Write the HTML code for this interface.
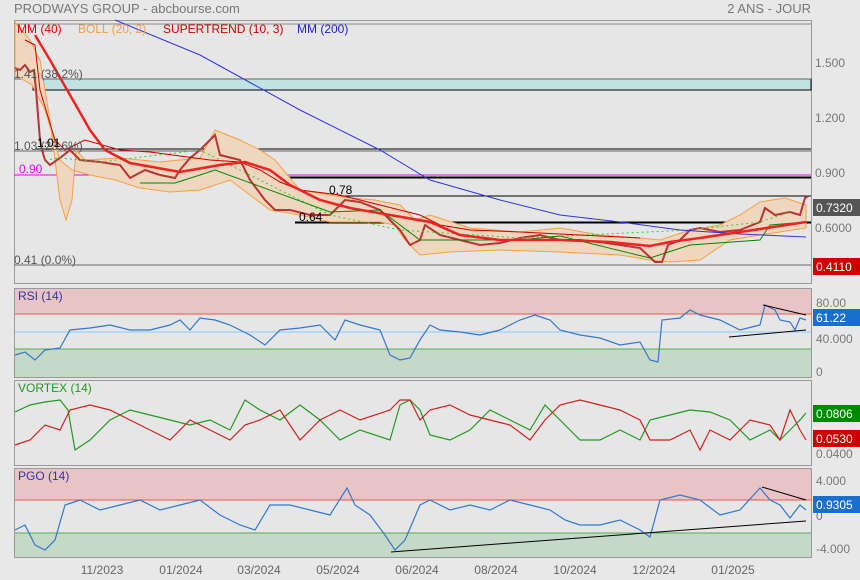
<!DOCTYPE html>
<html><head><meta charset="utf-8"><style>
body{margin:0;width:860px;height:580px;background:#e8e8e8;font-family:"Liberation Sans",sans-serif;overflow:hidden}
svg{display:block}
text{font-family:"Liberation Sans",sans-serif}
</style></head><body>
<svg width="860" height="580" xmlns="http://www.w3.org/2000/svg">
<rect width="860" height="580" fill="#e8e8e8"/>
<text x="14" y="13" font-size="13" fill="#777">PRODWAYS GROUP - abcbourse.com</text>
<text x="811" y="13" font-size="13" fill="#777" text-anchor="end">2 ANS - JOUR</text>
<rect x="14.5" y="20.5" width="797" height="263" fill="#e6e6e6" stroke="#999"/>
<line x1="14" y1="24" x2="811" y2="24" stroke="#888"/>
<rect x="33" y="79" width="778" height="11" fill="#bfe3e3" stroke="#000"/>
<line x1="14" y1="79" x2="811" y2="79" stroke="#666"/>
<line x1="14" y1="151" x2="811" y2="151" stroke="#666"/>
<line x1="35" y1="149" x2="811" y2="149" stroke="#000"/>
<line x1="14" y1="175" x2="811" y2="175" stroke="#e0e"/>
<line x1="243" y1="177.5" x2="811" y2="177.5" stroke="#000" stroke-width="2"/>
<line x1="325" y1="196" x2="811" y2="196" stroke="#000"/>
<line x1="295" y1="222.5" x2="811" y2="222.5" stroke="#000" stroke-width="2"/>
<line x1="14" y1="265" x2="811" y2="265" stroke="#666"/>
<path d="M15,22 L30,40 L40,60 L50,120 L60,200 L66,220 L72,200 L76,150 L85,160 L120,158 L160,162 L200,158 L215,130 L240,140 L260,150 L275,160 L300,190 L330,195 L350,198 L375,200 L400,205 L415,220 L430,215 L470,228 L520,232 L560,228 L600,235 L640,238 L660,240 L690,230 L720,225 L740,215 L760,202 L785,198 L806,205 L806,228 L780,232 L760,235 L730,240 L700,260 L670,262 L650,260 L620,255 L560,252 L500,250 L450,252 L420,255 L405,240 L395,225 L380,222 L330,222 L300,215 L270,210 L250,195 L230,180 L200,190 L170,192 L140,188 L115,180 L90,175 L72,170 L60,160 L45,110 L32,85 L15,75 Z" fill="#eed6bf" stroke="#f5a040"/>
<polyline points="15,68 20,70 25,65 30,72 34,70 36,90 38,115 40,140 42,150 45,160 50,165 60,158 70,150 80,160 100,162 120,165 130,178 145,170 160,175 175,178 180,170 190,158 200,150 215,135 220,155 240,160 250,180 265,200 275,210 290,210 310,215 330,215 345,200 360,202 380,210 390,220 400,230 410,245 420,240 425,225 440,235 460,240 480,245 500,243 520,238 540,235 560,240 580,240 600,242 620,245 640,248 655,262 662,262 668,245 680,240 690,230 700,228 720,232 740,230 760,222 765,208 775,215 790,212 800,215 805,198 808,196" fill="none" stroke="#b33" stroke-width="2"/>
<polyline points="45,160 60,158 100,162 200,150 330,215 400,230 520,238 690,230 760,222 790,212" fill="none" stroke="#3c3" stroke-width="1" stroke-dasharray="2 3"/>
<polyline points="25,40 35,45 40,90 55,140 65,150 85,140 120,150 150,152 180,156 210,160 240,162 260,170 280,182 300,190 340,195 360,200 380,205 400,210 420,215 440,225 470,230 520,232 600,236 640,238" fill="none" stroke="#c00" stroke-width="1"/>
<polyline points="140,183 175,183 200,175 215,170 330,212 380,210 420,240 520,240 560,236 650,258 690,245 760,240 770,225 806,222" fill="none" stroke="#080" stroke-width="1"/>
<polyline points="115,20 200,55 300,110 380,150 430,180 500,200 560,215 620,222 680,230 740,234 806,237" fill="none" stroke="#33d" stroke-width="1"/>
<polyline points="35,35 50,60 70,95 90,130 105,150 130,163 180,172 220,165 245,162 270,170 290,185 320,200 350,208 390,215 430,222 460,235 500,240 560,240 610,242 650,246 670,242 700,238 740,232 780,226 806,222" fill="none" stroke="#e22" stroke-width="2.5"/>
<text x="17" y="33" font-size="12" fill="#e00">MM (40)</text>
<text x="78" y="33" font-size="12" fill="#f0a040">BOLL (20, 2)</text>
<text x="163" y="33" font-size="12" fill="#c00">SUPERTREND (10, 3)</text>
<text x="297" y="33" font-size="12" fill="#22c">MM (200)</text>
<text x="14" y="78" font-size="12" fill="#555">1.41  (38.2%)</text>
<text x="14" y="150" font-size="12" fill="#555">1.03  (23.6%)</text>
<text x="37" y="147" font-size="12" fill="#000">1.01</text>
<text x="19" y="173" font-size="12" fill="#e0e">0.90</text>
<text x="329" y="194" font-size="12" fill="#000">0.78</text>
<text x="299" y="221" font-size="12" fill="#000">0.64</text>
<text x="14" y="264" font-size="12" fill="#555">0.41  (0.0%)</text>
<g font-size="12" fill="#777"><text x="815" y="67">1.500</text><text x="815" y="122">1.200</text><text x="815" y="177">0.900</text><text x="815" y="232">0.6000</text></g>
<rect x="813" y="199" width="47" height="17" fill="#555"/><text x="816" y="212" font-size="12" fill="#fff">0.7320</text>
<rect x="813" y="258" width="47" height="17" fill="#c00"/><text x="816" y="271" font-size="12" fill="#fff">0.4110</text>
<rect x="14.5" y="288.5" width="797" height="89" fill="#e6e6e6" stroke="#999"/>
<rect x="15" y="289" width="796" height="25" fill="#e8c4c4"/>
<line x1="15" y1="314" x2="811" y2="314" stroke="#e55"/>
<line x1="15" y1="332" x2="811" y2="332" stroke="#8cf"/>
<rect x="15" y="349" width="796" height="28" fill="#c6d9c6"/>
<line x1="15" y1="349" x2="811" y2="349" stroke="#5a5"/>
<polyline points="15,355 25,352 35,360 45,350 60,348 70,330 90,328 110,325 130,330 150,330 170,325 180,320 190,330 200,318 215,320 230,325 250,335 265,345 280,330 300,328 320,325 335,340 345,320 360,325 380,330 390,355 400,360 410,358 420,340 430,325 440,330 460,332 480,335 500,330 520,320 535,315 550,320 560,330 580,335 600,338 620,345 640,342 650,360 658,362 662,320 680,318 690,310 700,315 720,320 740,330 760,325 765,305 775,310 780,320 790,322 795,330 800,318 806,320" fill="none" stroke="#37c" stroke-width="1.2"/>
<polyline points="763,305 806,315" stroke="#000" fill="none"/>
<polyline points="729,337 806,330" stroke="#000" fill="none"/>
<text x="18" y="300" font-size="12" fill="#33a">RSI (14)</text>
<g font-size="12" fill="#777"><text x="816" y="307">80.00</text><text x="816" y="343">40.000</text><text x="816" y="376">0</text></g>
<rect x="813" y="309" width="47" height="17" fill="#1a6fcc"/><text x="816" y="322" font-size="12" fill="#fff">61.22</text>
<rect x="14.5" y="380.5" width="797" height="85" fill="#e6e6e6" stroke="#999"/>
<polyline points="15,412 30,405 45,402 60,400 68,410 75,450 90,440 110,420 130,410 150,415 170,420 190,425 210,420 230,430 245,400 260,410 280,420 300,405 320,420 340,440 360,430 390,440 400,405 410,400 420,410 430,435 450,440 470,430 490,410 510,420 530,430 545,405 560,420 580,440 600,440 620,430 640,440 650,420 670,415 690,410 710,412 730,420 750,440 770,430 780,440 790,430 800,420 806,413" fill="none" stroke="#292" stroke-width="1.2"/>
<polyline points="15,445 30,440 45,425 60,430 70,410 90,405 110,410 130,420 150,430 170,440 190,420 210,430 230,440 245,425 260,420 280,410 300,440 320,420 340,410 360,420 390,410 400,400 410,400 420,420 430,410 450,405 470,415 490,420 510,425 530,440 545,420 560,405 580,400 600,405 620,410 640,420 650,440 670,440 690,430 700,450 710,430 730,440 750,420 770,425 780,440 790,410 800,430 806,440" fill="none" stroke="#c22" stroke-width="1.2"/>
<text x="18" y="392" font-size="12" fill="#292">VORTEX (14)</text>
<rect x="813" y="405" width="47" height="17" fill="#080"/><text x="816" y="418" font-size="12" fill="#fff">0.0806</text>
<rect x="813" y="430" width="47" height="17" fill="#c00"/><text x="816" y="443" font-size="12" fill="#fff">0.0530</text>
<text x="816" y="458" font-size="12" fill="#777">0.0400</text>
<rect x="14.5" y="468.5" width="797" height="89" fill="#e6e6e6" stroke="#999"/>
<rect x="15" y="469" width="796" height="31" fill="#e8c4c4"/>
<line x1="15" y1="500" x2="811" y2="500" stroke="#e55"/>
<rect x="15" y="533" width="796" height="24" fill="#c6d9c6"/>
<line x1="15" y1="533" x2="811" y2="533" stroke="#5a5"/>
<polyline points="15,530 25,525 35,545 45,550 55,540 65,505 80,500 100,510 120,505 140,500 160,510 180,505 200,500 220,515 240,525 255,530 270,505 290,505 310,510 330,515 347,488 355,505 370,515 385,535 395,550 405,540 420,505 430,500 450,510 470,505 490,510 510,500 530,505 550,510 565,520 580,525 600,525 620,520 640,530 650,537 660,500 680,495 700,500 720,515 740,510 760,488 770,500 780,505 790,518 800,505 806,510" fill="none" stroke="#37c" stroke-width="1.2"/>
<line x1="391" y1="552" x2="806" y2="521" stroke="#000"/>
<line x1="762" y1="487" x2="806" y2="500" stroke="#000"/>
<text x="18" y="480" font-size="12" fill="#33a">PGO (14)</text>
<g font-size="12" fill="#777"><text x="816" y="485">4.000</text><text x="816" y="520">0</text><text x="816" y="553">-4.000</text></g>
<rect x="813" y="496" width="47" height="17" fill="#1a6fcc"/><text x="816" y="509" font-size="12" fill="#fff">0.9305</text>
<g font-size="12" fill="#666" text-anchor="middle">
<text x="102" y="574">11/2023</text><text x="181" y="574">01/2024</text><text x="259" y="574">03/2024</text><text x="338" y="574">05/2024</text><text x="417" y="574">06/2024</text><text x="496" y="574">08/2024</text><text x="575" y="574">10/2024</text><text x="654" y="574">12/2024</text><text x="733" y="574">01/2025</text>
</g>
</svg>
</body></html>
